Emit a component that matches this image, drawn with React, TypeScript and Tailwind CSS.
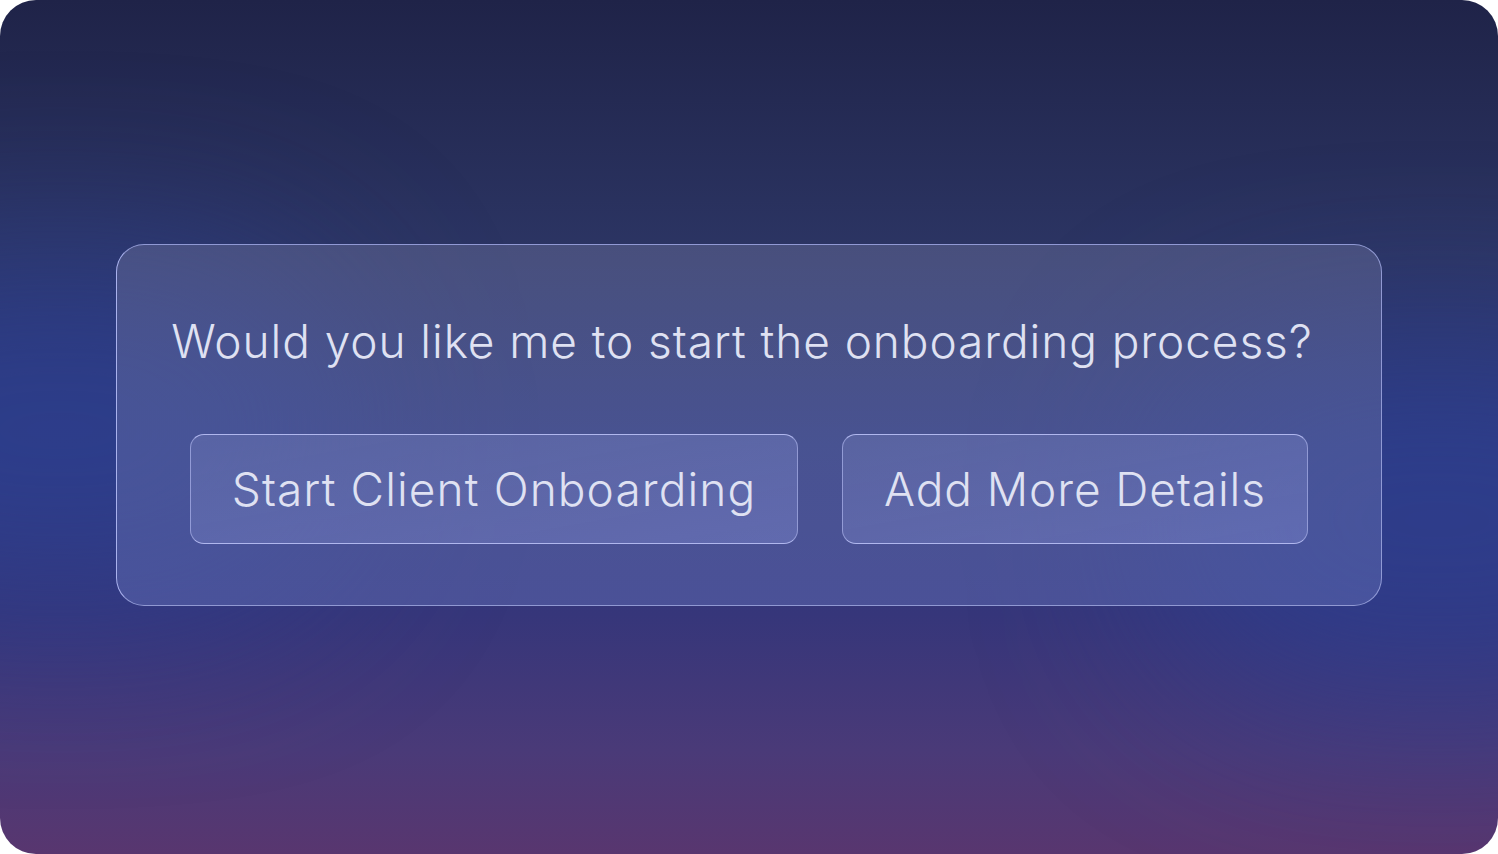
export default function App() {
  return (
    <div className="h-[854px] w-[1498px] bg-white" style={{ fontFamily: "Inter, 'Noto Sans', sans-serif" }}>
      <div className="relative flex h-full w-full items-center justify-center overflow-hidden rounded-[36px] bg-[linear-gradient(180deg,#1f2348_0%,#2c3564_30%,#2f3a7c_52%,#36367a_72%,#4a3a78_88%,#58366f_100%)] pb-[4px]">
        <div className="pointer-events-none absolute left-[-220px] top-[260px] h-[340px] w-[560px] rounded-full bg-[#2c3e92]/70 blur-[90px]" />
        <div className="pointer-events-none absolute right-[-220px] top-[350px] h-[340px] w-[560px] rounded-full bg-[#2c3e92]/70 blur-[90px]" />
        <div className="relative flex h-[362px] w-[1266px] flex-col items-center rounded-[28px] border-[1.5px] border-[#9aa2dc]/90 border-l-[#aab2ee] bg-[linear-gradient(180deg,rgba(100,106,150,0.5)_0%,rgba(96,108,180,0.5)_100%)] pt-[64px]">
          <p className="mr-[14px] text-[46px] font-[350] leading-[64px] tracking-[0.92px] text-[#dfe1f2]">
            Would you like me to start the onboarding process?
          </p>
          <div className="mt-[61px] flex gap-[44px]">
            <button className="h-[110px] w-[608px] rounded-[14px] border-[1.5px] border-[#a9b0e8]/70 border-t-[#b0b7ee] border-b-[#b0b7ee] bg-[linear-gradient(170deg,rgba(110,120,180,0.45),rgba(120,130,200,0.5))] text-[46px] font-[350] tracking-[1.1px] text-[#dfe1f2]">
              Start Client Onboarding
            </button>
            <button className="h-[110px] w-[466px] rounded-[14px] border-[1.5px] border-[#a9b0e8]/70 border-t-[#b0b7ee] border-b-[#b0b7ee] bg-[linear-gradient(170deg,rgba(110,120,180,0.45),rgba(120,130,200,0.5))] text-[46px] font-[350] tracking-[0.9px] text-[#dfe1f2]">
              Add More Details
            </button>
          </div>
        </div>
      </div>
    </div>
  );
}
